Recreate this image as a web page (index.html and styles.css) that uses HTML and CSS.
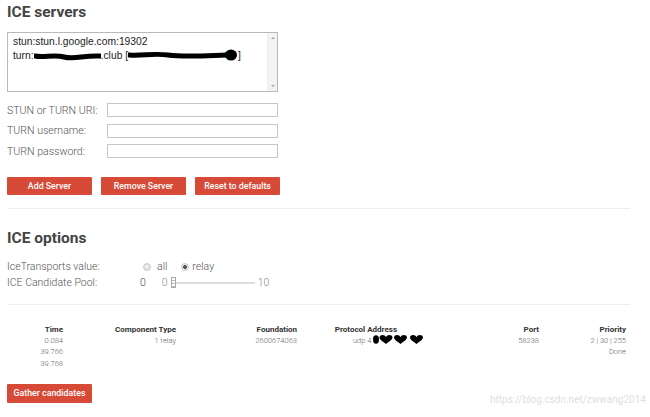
FILE: index.html
```
<!DOCTYPE html>
<html>
<head>
<meta charset="utf-8">
<link rel="stylesheet" href="styles.css">
</head>
<body>
<div class="page">
  <h2 class="title title--first">ICE servers</h2>
  <div class="listbox">
    <div class="listbox__items">
      <div class="listbox__item">stun:stun.l.google.com:19302</div>
      <div class="listbox__item">turn:<svg class="scribble" width="67" height="10" viewBox="0 0 67 10"><path d="M1 5 C10 7 20 3 30 6 S50 4 66 5" stroke="#000" stroke-width="5" fill="none" stroke-linecap="round"/></svg>.club [<svg class="scribble" width="110" height="12" viewBox="0 0 110 12"><path d="M1 6 C15 7 25 4 40 6 S70 7 98 6" stroke="#000" stroke-width="5" fill="none" stroke-linecap="round"/><ellipse cx="103" cy="6" rx="6" ry="5.5" fill="#000"/></svg>]</div>
    </div>
    <div class="listbox__scroll">
      <span class="arrow arrow--up"></span>
      <span class="arrow arrow--down"></span>
    </div>
  </div>

  <div class="form">
    <div class="form__row"><label class="form__label">STUN or TURN URI:</label><span class="field"></span></div>
    <div class="form__row"><label class="form__label">TURN username:</label><span class="field"></span></div>
    <div class="form__row"><label class="form__label">TURN password:</label><span class="field"></span></div>
  </div>

  <div class="buttons">
    <button class="btn">Add Server</button>
    <button class="btn">Remove Server</button>
    <button class="btn">Reset to defaults</button>
  </div>

  <hr class="rule rule--first">

  <h2 class="title title--second">ICE options</h2>
  <div class="opt opt--first">
    <span class="opt__label">IceTransports value:</span>
    <span class="radio"></span><span class="opt__text opt__text--all">all</span>
    <span class="radio radio--on"></span><span class="opt__text">relay</span>
  </div>
  <div class="opt opt--second">
    <span class="opt__label">ICE Candidate Pool:</span>
    <span class="opt__text opt__text--val">0</span>
    <span class="opt__text opt__text--min">0</span>
    <span class="slider"><span class="slider__thumb"></span><span class="slider__track"></span></span>
    <span class="opt__text opt__text--max">10</span>
  </div>

  <hr class="rule rule--second">

  <div class="table">
    <div class="th">Time</div>
    <div class="th">Component Type</div>
    <div class="th">Foundation</div>
    <div class="th">Protocol Address</div>
    <div class="th">Port</div>
    <div class="th">Priority</div>

    <div class="td">0.084</div>
    <div class="td">1 relay</div>
    <div class="td">2600674063</div>
    <div class="td td--addr">udp 4<svg class="hearts" width="52" height="9" viewBox="0 0 52 9"><ellipse cx="3" cy="4.5" rx="3" ry="4.2" fill="#000"/><path d="M13 9 C8.5 6 6.5 4.2 6.5 2.6 C6.5 0.8 8.1 0 9.7 0 C11.1 0 12.3 0.8 13 1.9 C13.7 0.8 14.9 0 16.3 0 C17.9 0 19.5 0.8 19.5 2.6 C19.5 4.2 17.5 6 13 9Z" fill="#000"/><path d="M27.5 9 C23 6 21 4.2 21 2.6 C21 0.8 22.6 0 24.2 0 C25.6 0 26.8 0.8 27.5 1.9 C28.2 0.8 29.4 0 30.8 0 C32.4 0 34 0.8 34 2.6 C34 4.2 32 6 27.5 9Z" fill="#000"/><path d="M43.5 9 C39 6 37 4.2 37 2.6 C37 0.8 38.6 0 40.2 0 C41.6 0 42.8 0.8 43.5 1.9 C44.2 0.8 45.4 0 46.8 0 C48.4 0 50 0.8 50 2.6 C50 4.2 48 6 43.5 9Z" fill="#000"/></svg></div>
    <div class="td">58238</div>
    <div class="td">2 | 30 | 255</div>

    <div class="td">39.766</div>
    <div class="td"></div>
    <div class="td"></div>
    <div class="td"></div>
    <div class="td"></div>
    <div class="td">Done</div>

    <div class="td">39.768</div>
    <div class="td"></div>
    <div class="td"></div>
    <div class="td"></div>
    <div class="td"></div>
    <div class="td"></div>
  </div>

  <button class="btn btn--gather">Gather candidates</button>

  <div class="watermark">https://blog.csdn.net/zwwang2014</div>
</div>
</body>
</html>
```
FILE: styles.css
```
html, body {
  margin: 0;
  padding: 0;
  background: #fff;
}
body {
  font-family: Roboto, "Noto Sans", sans-serif;
  font-weight: 300;
  color: #444;
}
.page {
  position: relative;
  width: 623px;
  height: 417px;
  padding: 0 0 0 7px;
  display: flex;
  flex-direction: column;
  align-items: flex-start;
}
.title {
  margin: 0;
  font-size: 15.5px;
  line-height: 20px;
  font-weight: 700;
  color: #444;
}
.title--first { margin-top: 2px; }
.title--second { margin-top: 19px; }

.listbox {
  margin-top: 10px;
  width: 269px;
  height: 58px;
  border: 1px solid #b9b9b9;
  display: flex;
  box-sizing: content-box;
}
.listbox__items {
  flex: 1;
  padding: 3px 0 0 5px;
  font-family: "Liberation Sans", Arial, sans-serif;
  font-weight: 400;
  font-size: 10.3px;
  line-height: 12.5px;
  color: #222;
}
.listbox__item { white-space: nowrap; }
.scribble { vertical-align: -2px; }
.listbox__scroll {
  width: 9px;
  background: #f3f3f3;
  border-left: 1px solid #ececec;
  display: flex;
  flex-direction: column;
  justify-content: space-between;
  align-items: center;
  padding: 4px 0;
}
.arrow {
  width: 0;
  height: 0;
  border-left: 2px solid transparent;
  border-right: 2px solid transparent;
}
.arrow--up { border-bottom: 2px solid #a3a3a3; }
.arrow--down { border-top: 2px solid #a3a3a3; }

.form {
  margin-top: 11px;
  display: flex;
  flex-direction: column;
  gap: 6.5px;
}
.form__row {
  display: flex;
  align-items: center;
  height: 14px;
}
.form__label {
  width: 100px;
  font-size: 10.6px;
  color: #555;
}
.field {
  width: 169px;
  height: 12px;
  border: 1px solid #c6c6c6;
  background: #fff;
}

.buttons {
  margin-top: 19px;
  display: flex;
  gap: 9px;
}
.btn {
  width: 85px;
  height: 18px;
  padding: 0;
  border: none;
  border-radius: 1px;
  background: #d84a38;
  color: #fff;
  font-family: Roboto, sans-serif;
  font-weight: 500;
  font-size: 8.8px;
  line-height: 18px;
  text-align: center;
}

.rule {
  align-self: stretch;
  margin: 0;
  border: none;
  border-top: 1px solid #eeeeee;
  height: 0;
}
.rule--first { margin-top: 13px; }
.rule--second { margin-top: 14.5px; }

.opt {
  display: flex;
  align-items: center;
  height: 14px;
  font-size: 10.5px;
  color: #555;
}
.opt--first { margin-top: 11.5px; }
.opt--second { margin-top: 2px; }
.opt__label { width: 133px; }
.opt__text { color: #555; }
.opt__text--all { margin: 0 14px 0 3px; }
.opt__text--val { margin-right: 16px; color: #444; }
.opt__text--min { color: #888; margin-right: 3px; }
.opt__text--max { color: #888; margin-left: 3px; }
.radio {
  width: 8px;
  height: 8px;
  border-radius: 50%;
  margin: 0 3px 0 3px;
  background: radial-gradient(circle at 50% 40%, #f4f4f4 0, #d6d6d6 100%);
  border: 0.5px solid #c8c8c8;
  box-sizing: border-box;
}
.radio--on {
  background: radial-gradient(circle, #555 0, #555 1.6px, #e6e6e6 2.2px, #d2d2d2 100%);
  margin-left: 0;
}
.slider {
  display: flex;
  align-items: center;
  width: 84px;
  height: 12px;
}
.slider__thumb {
  width: 5px;
  height: 11px;
  border: 1px solid #aaa;
  background: repeating-linear-gradient(#fff 0, #fff 2px, #bbb 2px, #bbb 3px);
  box-sizing: border-box;
}
.slider__track {
  flex: 1;
  height: 2px;
  background: #e2ddd8;
}

.table {
  margin-top: 18.5px;
  display: grid;
  grid-template-columns: 56px 113px 121px 100px 142px 87px;
  line-height: 11.4px;
}
.th {
  text-align: right;
  font-weight: 700;
  font-size: 8px;
  color: #333;
  white-space: nowrap;
}
.td {
  text-align: right;
  font-size: 7.5px;
  color: #666;
  white-space: nowrap;
}
.td--addr {
  text-align: left;
  padding-left: 56px;
}
.hearts { vertical-align: -1px; margin-left: 2px; }

.btn--gather {
  margin-top: 15px;
  height: 19px;
  line-height: 19px;
}

.watermark {
  position: absolute;
  left: 490px;
  top: 394px;
  font-family: Roboto, sans-serif;
  font-weight: 400;
  font-size: 10px;
  color: #e0e0e0;
  white-space: nowrap;
}
```
